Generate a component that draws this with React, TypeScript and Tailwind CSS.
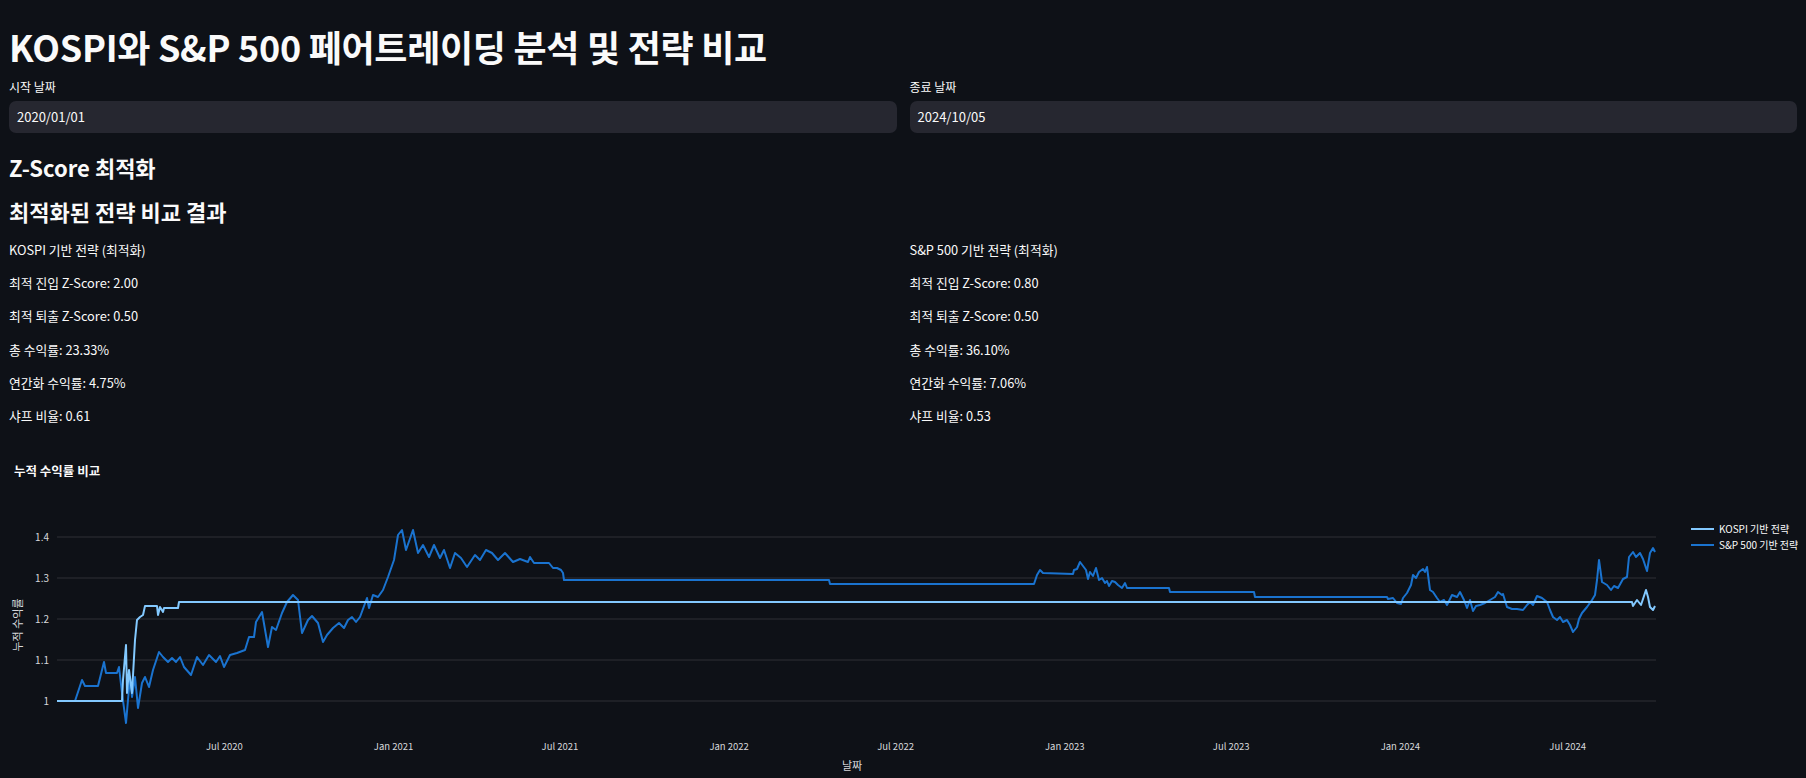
const START = Date.UTC(2020, 0, 1)
const PX_PER_DAY = 0.9195
const dateX = (y: number, m: number) => 57 + ((Date.UTC(y, m, 1) - START) / 86400000) * PX_PER_DAY

// page-space points read off the reference
const spPoints: [number, number][] = [
  [57, 701], [75, 701], [82, 680], [85, 686], [98, 686], [104, 662], [106, 673], [117, 673], [119, 667],
  [122, 693], [126, 723], [130, 677], [132, 697], [135, 677], [138, 708], [142, 683], [145, 677], [149, 687],
  [153, 670], [159, 652], [163, 657], [168, 662], [172, 658], [176, 662], [180, 657], [184, 667], [191, 675],
  [197, 657], [203, 665], [209, 655], [216, 662], [220, 656], [224, 667], [230, 655], [237, 653], [245, 650],
  [249, 637], [254, 637], [256, 622], [262, 612], [268, 647], [272, 627], [276, 630], [282, 613], [287, 602],
  [293, 595], [298, 600], [302, 633], [308, 620], [312, 616], [318, 623], [323, 642], [327, 635], [333, 628],
  [339, 623], [344, 628], [348, 620], [352, 617], [356, 622], [360, 617], [367, 598], [369, 608], [373, 595],
  [378, 597], [383, 590], [388, 577], [394, 560], [398, 535], [402, 530], [406, 550], [413, 530], [418, 553],
  [423, 545], [429, 557], [434, 545], [440, 558], [444, 550], [450, 568], [455, 553], [461, 558], [467, 567],
  [475, 555], [480, 560], [486, 550], [492, 553], [498, 560], [505, 553], [513, 562], [520, 559], [528, 562],
  [530, 557], [534, 563], [549, 563], [553, 568], [557, 568], [561, 570], [563, 573], [564, 580], [829, 580],
  [830, 584], [1034, 584], [1037, 575], [1040, 570], [1043, 573], [1073, 574], [1074, 570], [1077, 569],
  [1080, 562], [1083, 566], [1086, 570], [1088, 579], [1090, 572], [1093, 576], [1096, 568], [1099, 580],
  [1102, 578], [1105, 583], [1107, 581], [1109, 586], [1112, 581], [1115, 582], [1118, 585], [1122, 588],
  [1125, 583], [1127, 588], [1169, 588], [1170, 592], [1254, 592], [1255, 597], [1387, 597], [1388, 599],
  [1393, 598], [1397, 603], [1401, 604], [1403, 598], [1407, 593], [1411, 585], [1413, 575], [1416, 578],
  [1419, 572], [1423, 569], [1425, 572], [1427, 567], [1430, 590], [1433, 592], [1437, 598], [1440, 602],
  [1444, 600], [1447, 605], [1452, 595], [1457, 597], [1460, 592], [1464, 600], [1467, 608], [1470, 600],
  [1473, 611], [1476, 606], [1480, 605], [1485, 603], [1490, 600], [1495, 597], [1498, 592], [1502, 595],
  [1503, 594], [1507, 607], [1512, 609], [1517, 609], [1523, 610], [1527, 605], [1530, 602], [1533, 605],
  [1537, 596], [1542, 598], [1547, 602], [1550, 610], [1553, 617], [1557, 620], [1560, 617], [1563, 622],
  [1567, 620], [1570, 625], [1573, 632], [1577, 627], [1579, 619], [1582, 613], [1587, 607], [1592, 600],
  [1595, 595], [1597, 580], [1599, 560], [1602, 582], [1607, 585], [1611, 590], [1614, 586], [1618, 588],
  [1623, 579], [1627, 577], [1629, 557], [1633, 552], [1636, 557], [1640, 553], [1643, 559], [1647, 571],
  [1650, 553], [1653, 548], [1655, 552],
]

const kospiPoints: [number, number][] = [
  [57, 701], [122, 701], [123, 680], [126, 645], [127, 693], [129, 670], [132, 693], [135, 640], [137, 620],
  [140, 617], [143, 615], [145, 606], [157, 606], [158, 615], [160, 607], [163, 612], [164, 608], [178, 608],
  [179, 602], [1632, 602], [1633, 606], [1637, 600], [1641, 605], [1646, 590], [1648, 597], [1650, 607],
  [1653, 610], [1655, 606],
]

const toPath = (pts: [number, number][]) =>
  pts.map(([x, y], i) => `${i === 0 ? 'M' : 'L'}${x} ${y}`).join(' ')

const gridRows = [
  { y: 537, label: '1.4' },
  { y: 578, label: '1.3' },
  { y: 619, label: '1.2' },
  { y: 660, label: '1.1' },
  { y: 701, label: '1' },
]

const xTicks = [
  { label: 'Jul 2020', x: dateX(2020, 6) },
  { label: 'Jan 2021', x: dateX(2021, 0) },
  { label: 'Jul 2021', x: dateX(2021, 6) },
  { label: 'Jan 2022', x: dateX(2022, 0) },
  { label: 'Jul 2022', x: dateX(2022, 6) },
  { label: 'Jan 2023', x: dateX(2023, 0) },
  { label: 'Jul 2023', x: dateX(2023, 6) },
  { label: 'Jan 2024', x: dateX(2024, 0) },
  { label: 'Jul 2024', x: dateX(2024, 6) },
]

const strategies = [
  {
    name: 'KOSPI 기반 전략 (최적화)',
    entry: '2.00',
    exit: '0.50',
    total: '23.33%',
    annual: '4.75%',
    sharpe: '0.61',
  },
  {
    name: 'S&P 500 기반 전략 (최적화)',
    entry: '0.80',
    exit: '0.50',
    total: '36.10%',
    annual: '7.06%',
    sharpe: '0.53',
  },
]

function DateField({ label, value }: { label: string; value: string }) {
  return (
    <div>
      <div className="text-[12px] leading-[18px] text-[#fafafa]">{label}</div>
      <div className="mt-[5px] flex h-[32px] items-center rounded-[7px] bg-[#262730] px-[8px] text-[13px] text-[#fafafa]">
        {value}
      </div>
    </div>
  )
}

function CumulativeChart() {
  return (
    <svg width={1789} height={328} viewBox="9 450 1789 328" className="block">
      <text x={14} y={476} fontSize={12.5} fontWeight={700} fill="#fafafa">
        누적 수익률 비교
      </text>

      {gridRows.map((g) => (
        <g key={g.label}>
          <line x1={57} x2={1656} y1={g.y} y2={g.y} stroke="#2e3037" strokeWidth={1} />
          <text x={49} y={g.y + 3.5} fontSize={10} fill="#d7d8db" textAnchor="end">
            {g.label}
          </text>
        </g>
      ))}

      {xTicks.map((t) => (
        <text key={t.label} x={t.x} y={749.5} fontSize={9.5} fill="#d7d8db" textAnchor="middle">
          {t.label}
        </text>
      ))}

      <text x={852} y={770} fontSize={11} fill="#d7d8db" textAnchor="middle">
        날짜
      </text>
      <text
        x={0}
        y={0}
        fontSize={11}
        fill="#d7d8db"
        textAnchor="middle"
        transform="translate(22 625) rotate(-90)"
      >
        누적 수익률
      </text>

      <path d={toPath(spPoints)} fill="none" stroke="#1a73cf" strokeWidth={2} strokeLinejoin="round" />
      <path d={toPath(kospiPoints)} fill="none" stroke="#83c9ff" strokeWidth={2} strokeLinejoin="round" />

      {/* legend */}
      <line x1={1691} x2={1714} y1={529} y2={529} stroke="#83c9ff" strokeWidth={2} />
      <text x={1719} y={532.5} fontSize={10} fill="#fafafa">
        KOSPI 기반 전략
      </text>
      <line x1={1691} x2={1714} y1={545} y2={545} stroke="#1a73cf" strokeWidth={2} />
      <text x={1719} y={548.5} fontSize={10} fill="#fafafa">
        S&amp;P 500 기반 전략
      </text>
    </svg>
  )
}

export default function App() {
  return (
    <div className="h-screen overflow-hidden bg-[#0e1117] px-[9px] font-['Noto_Sans_CJK_KR',sans-serif] text-[#fafafa]">
      <h1 className="pt-[22px] text-[36px] font-bold leading-[48px] tracking-[-0.3px]">
        KOSPI와 S&amp;P 500 페어트레이딩 분석 및 전략 비교
      </h1>

      <div className="mt-[8px] grid grid-cols-2 gap-x-[13px]">
        <DateField label="시작 날짜" value="2020/01/01" />
        <DateField label="종료 날짜" value="2024/10/05" />
      </div>

      <h3 className="mt-[18px] text-[22px] font-bold leading-[32px]">Z-Score 최적화</h3>
      <h3 className="mt-[12px] text-[22px] font-bold leading-[32px]">최적화된 전략 비교 결과</h3>

      <div className="mt-[13px] grid grid-cols-2 gap-x-[13px]">
        {strategies.map((s) => (
          <div key={s.name} className="space-y-[13.2px] text-[12.8px] leading-[20px]">
            <p>{s.name}</p>
            <p>최적 진입 Z-Score: {s.entry}</p>
            <p>최적 퇴출 Z-Score: {s.exit}</p>
            <p>총 수익률: {s.total}</p>
            <p>연간화 수익률: {s.annual}</p>
            <p>샤프 비율: {s.sharpe}</p>
          </div>
        ))}
      </div>

      <div className="mt-[24px]">
        <CumulativeChart />
      </div>
    </div>
  )
}
